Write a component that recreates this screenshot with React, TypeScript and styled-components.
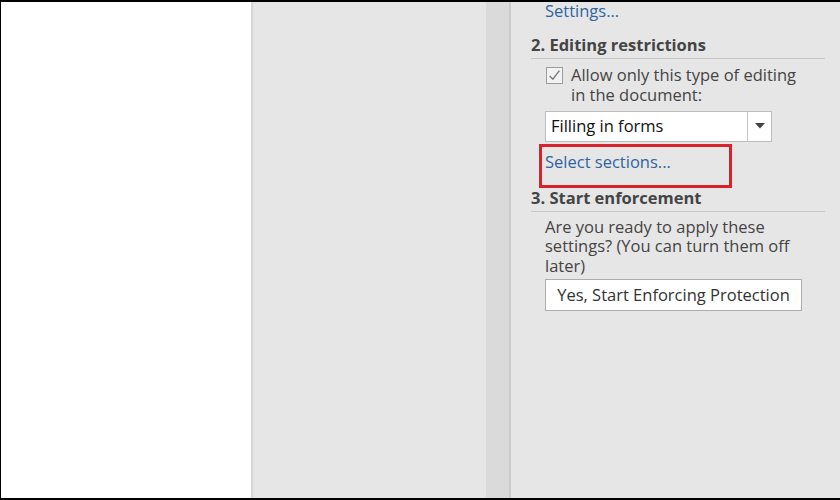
import React from "react";
import styled, { createGlobalStyle } from "styled-components";

const Global = createGlobalStyle`
  html, body { margin: 0; padding: 0; background: #000; }
  body { font-family: "Open Sans", "Noto Sans", sans-serif; }
`;

const Frame = styled.div`
  width: 840px;
  height: 500px;
  box-sizing: border-box;
  background: #000;
  padding: 2px 2px 2px 1px;
  display: flex;
`;

const Page = styled.div`
  width: 250px;
  background: #fff;
  flex: none;
`;

const Canvas = styled.div`
  width: 233px;
  flex: none;
  background: #e6e6e6;
  border-left: 2px solid #d6d6d6;
`;

const Scrollbar = styled.div`
  width: 23px;
  flex: none;
  background: #dadada;
  border-right: 2px solid #cbcbcb;
`;

const Pane = styled.div`
  flex: 1;
  background: #e6e6e6;
  padding: 0 20px 0 20px;
  color: #444;
  font-size: 16.5px;
  line-height: 20px;
`;

const Indent = styled.div`
  padding-left: 14px;
`;

const Link = styled.div<{ $lh?: number }>`
  color: #2e64a0;
  line-height: ${(p) => p.$lh ?? 20}px;
`;

const Heading = styled.div<{ $top: number }>`
  margin-top: ${(p) => p.$top}px;
  font-weight: 700;
  font-size: 16.5px;
  line-height: 22px;
  padding-bottom: 2px;
  border-bottom: 1px solid #c6c6c6;
`;

const CheckRow = styled.div`
  display: flex;
  gap: 8px;
  margin-top: 6px;
  padding-left: 15px;
`;

const CheckLabel = styled.div`
  line-height: 20.5px;
  margin-top: -0.5px;
`;

const CheckBox = styled.div`
  width: 15px;
  height: 15px;
  flex: none;
  margin-top: 2px;
  border: 1px solid #9c9c9c;
  background: #f2f2f2;
  display: flex;
  align-items: center;
  justify-content: center;
`;

const Select = styled.div`
  margin-top: 5px;
  width: 227px;
  height: 31px;
  box-sizing: border-box;
  background: #fff;
  border: 1px solid #bdbdbd;
  display: flex;
  color: #111;
`;

const SelectText = styled.div`
  flex: 1;
  padding-left: 5px;
  display: flex;
  align-items: center;
`;

const SelectArrow = styled.div`
  width: 23px;
  border-left: 1px solid #c8c8c8;
  display: flex;
  align-items: center;
  justify-content: center;
`;

const Highlight = styled.div`
  margin: 2px 0 0 -6px;
  width: 193px;
  height: 44px;
  box-sizing: border-box;
  border: 3px solid #d7232b;
  padding: 5px 0 0 3px;
`;

const Para = styled.div`
  margin-top: 5px;
  width: 280px;
  line-height: 19.5px;
`;

const Button = styled.div`
  margin-top: 4px;
  width: 257px;
  height: 32px;
  box-sizing: border-box;
  background: #fff;
  border: 1px solid #adadad;
  display: flex;
  align-items: center;
  justify-content: center;
  color: #333;
`;

export default function App() {
  return (
    <>
      <Global />
      <Frame>
        <Page />
        <Canvas />
        <Scrollbar />
        <Pane>
          <Indent>
            <Link $lh={17}>Settings...</Link>
          </Indent>
          <Heading $top={15}>2. Editing restrictions</Heading>
          <CheckRow>
            <CheckBox>
              <svg width="13" height="13" viewBox="0 0 12 12">
                <path d="M1.5 6.5 L4.5 9.5 L10.5 1.5" fill="none" stroke="#7a7a7a" strokeWidth="1.3" />
              </svg>
            </CheckBox>
            <CheckLabel>
              Allow only this type of editing
              <br />
              in the document:
            </CheckLabel>
          </CheckRow>
          <Indent>
            <Select>
              <SelectText>Filling in forms</SelectText>
              <SelectArrow>
                <svg width="10" height="6" viewBox="0 0 10 6">
                  <path d="M0 0 H10 L5 5.5 Z" fill="#444" />
                </svg>
              </SelectArrow>
            </Select>
            <Highlight>
              <Link>Select sections...</Link>
            </Highlight>
          </Indent>
          <Heading $top={-1}>3. Start enforcement</Heading>
          <Indent>
            <Para>
              Are you ready to apply these settings? (You can turn them off later)
            </Para>
            <Button>Yes, Start Enforcing Protection</Button>
          </Indent>
        </Pane>
      </Frame>
    </>
  );
}
